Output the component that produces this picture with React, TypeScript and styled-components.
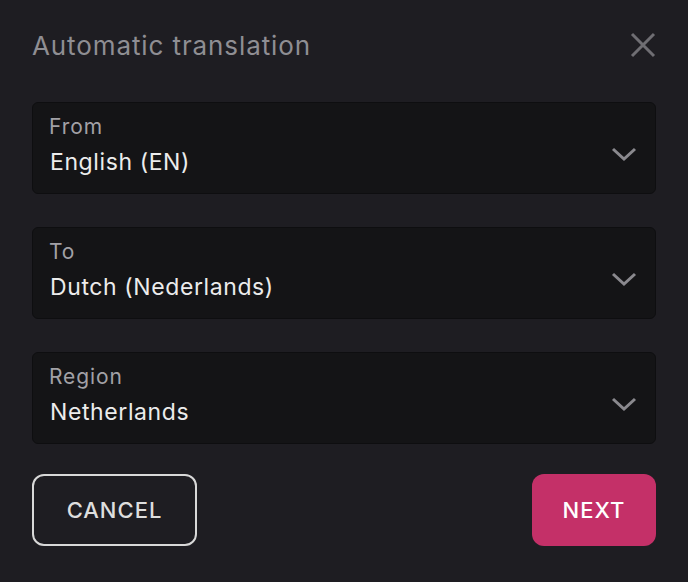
import styled, { createGlobalStyle } from "styled-components";

const GlobalStyle = createGlobalStyle`
  html, body {
    margin: 0;
    padding: 0;
    background: #1e1d22;
  }
  * { box-sizing: border-box; }
`;

const Dialog = styled.div`
  width: 688px;
  height: 582px;
  background: #1e1d22;
  padding: 26px 32px 0 32px;
  font-family: "Inter", "Liberation Sans", sans-serif;
  display: flex;
  flex-direction: column;
`;

const Header = styled.div`
  display: flex;
  justify-content: space-between;
  align-items: center;
  height: 38px;
  margin-bottom: 38px;
`;

const Title = styled.h1`
  margin: 0;
  font-size: 26px;
  font-weight: 400;
  color: #8f8e93;
  letter-spacing: 0.9px;
`;

const CloseButton = styled.button`
  background: none;
  border: none;
  padding: 0;
  width: 26px;
  height: 26px;
  cursor: pointer;
  display: flex;
  align-items: center;
  justify-content: center;
`;

const Fields = styled.div`
  display: flex;
  flex-direction: column;
  gap: 33px;
`;

const Field = styled.div`
  height: 92px;
  background: #141416;
  border: 1px solid #0e0e10;
  border-radius: 6px;
  padding: 11px 16px 0 16px;
  display: flex;
  align-items: center;
  justify-content: space-between;
  cursor: pointer;
`;

const FieldText = styled.div`
  display: flex;
  flex-direction: column;
  align-self: flex-start;
`;

const Label = styled.span`
  font-size: 21px;
  color: #a2a1a6;
  line-height: 26px;
  letter-spacing: 0.9px;
`;

const Value = styled.span`
  font-size: 23px;
  color: #ececec;
  line-height: 32px;
  margin-top: 6px;
  margin-left: 1px;
  letter-spacing: 0.6px;
`;

const Actions = styled.div`
  display: flex;
  justify-content: space-between;
  margin-top: 30px;
`;

const Button = styled.button<{ $primary?: boolean }>`
  height: 72px;
  padding: 0 16px;
  border-radius: 12px;
  font-family: inherit;
  font-size: 22px;
  font-weight: 500;
  letter-spacing: 1px;
  cursor: pointer;
  color: ${(p) => (p.$primary ? "#ffffff" : "#dedede")};
  background: ${(p) => (p.$primary ? "#c43068" : "transparent")};
  border: ${(p) => (p.$primary ? "none" : "2px solid #d8d8d8")};
  width: ${(p) => (p.$primary ? "124px" : "165px")};
`;

const Chevron = () => (
  <svg width="26" height="16" viewBox="0 0 26 16" style={{ marginRight: 2 }}>
    <path d="M2 3 L13 13 L24 3" fill="none" stroke="#8a898e" strokeWidth="3" />
  </svg>
);

const fields = [
  { label: "From", value: "English (EN)" },
  { label: "To", value: "Dutch (Nederlands)" },
  { label: "Region", value: "Netherlands" },
];

export default function App() {
  return (
    <>
      <GlobalStyle />
      <Dialog>
        <Header>
          <Title>Automatic translation</Title>
          <CloseButton aria-label="Close">
            <svg width="26" height="26" viewBox="0 0 26 26">
              <path d="M2 2 L24 24 M24 2 L2 24" stroke="#6f6e73" strokeWidth="3" />
            </svg>
          </CloseButton>
        </Header>
        <Fields>
          {fields.map((f) => (
            <Field key={f.label}>
              <FieldText>
                <Label>{f.label}</Label>
                <Value>{f.value}</Value>
              </FieldText>
              <Chevron />
            </Field>
          ))}
        </Fields>
        <Actions>
          <Button>CANCEL</Button>
          <Button $primary>NEXT</Button>
        </Actions>
      </Dialog>
    </>
  );
}
